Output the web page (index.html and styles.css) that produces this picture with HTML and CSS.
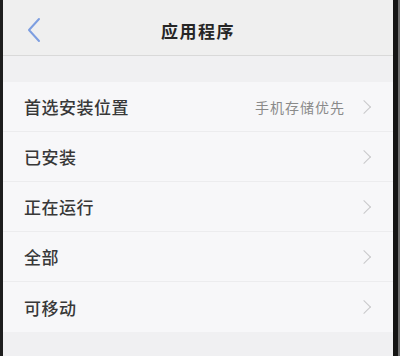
FILE: index.html
```html
<!DOCTYPE html>
<html lang="zh-CN">
<head>
    <meta charset="UTF-8">
    <meta name="viewport" content="width=device-width, initial-scale=1.0">
    <title>应用程序</title>
    <link rel="stylesheet" href="styles.css">
</head>
<body>
    <div class="phone">
        <header class="nav">
            <span class="back">
                <svg width="14" height="26" viewBox="0 0 14 26">
                    <path d="M12 2 L2 13 L12 24" fill="none" stroke="#7d9ee0" stroke-width="2" stroke-linecap="round" stroke-linejoin="round"/>
                </svg>
            </span>
            <h1>应用程序</h1>
        </header>

        <ul class="list">
            <li class="row">
                <span class="label">首选安装位置</span>
                <span class="value">手机存储优先</span>
                <span class="arrow"></span>
            </li>
            <li class="row">
                <span class="label">已安装</span>
                <span class="arrow"></span>
            </li>
            <li class="row">
                <span class="label">正在运行</span>
                <span class="arrow"></span>
            </li>
            <li class="row">
                <span class="label">全部</span>
                <span class="arrow"></span>
            </li>
            <li class="row">
                <span class="label">可移动</span>
                <span class="arrow"></span>
            </li>
        </ul>
    </div>
</body>
</html>
```

FILE: styles.css
```css
* {
    margin: 0;
    padding: 0;
    box-sizing: border-box;
}

body {
    font-family: "Noto Sans CJK SC", "Noto Sans", sans-serif;
    background-color: #6e6e6e;
    width: 400px;
    height: 356px;
    overflow: hidden;
}

.phone {
    width: 398px;
    height: 356px;
    border-left: 3px solid #1e1e1e;
    border-right: 5px solid #141414;
    background-color: #f0f0f2;
}

.nav {
    height: 56px;
    background-color: #efefef;
    border-bottom: 1px solid #d9d9d9;
    display: flex;
    align-items: center;
    justify-content: center;
    position: relative;
}

.back {
    position: absolute;
    left: 24px;
    top: 17px;
}

.nav h1 {
    font-size: 17px;
    font-weight: bold;
    color: #262626;
    letter-spacing: 1.5px;
    margin-top: 5px;
}

.list {
    list-style: none;
    margin-top: 26px;
    background-color: #f7f7f9;
}

.row {
    height: 50px;
    display: flex;
    align-items: center;
    padding: 0 24px 0 21px;
    border-bottom: 1px solid #ececee;
}

.row:last-child {
    border-bottom: none;
}

.label {
    flex: 1;
    font-size: 17px;
    font-weight: 500;
    color: #383838;
    letter-spacing: 0.5px;
}

.value {
    font-size: 14px;
    color: #8a8a8a;
    letter-spacing: 1px;
    margin-right: 14px;
}

.arrow {
    width: 10px;
    height: 10px;
    border-top: 1.5px solid #c8c8ca;
    border-right: 1.5px solid #c8c8ca;
    transform: rotate(45deg);
}
```
